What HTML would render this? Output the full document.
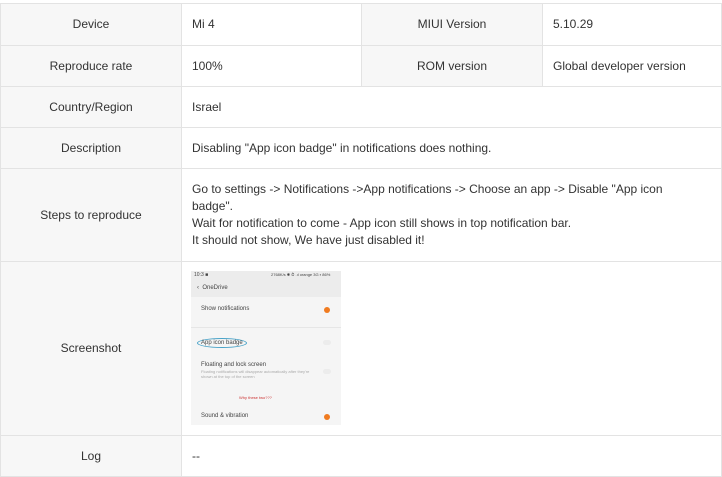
<!DOCTYPE html>
<html><head><style>
*{margin:0;padding:0;box-sizing:border-box}
body{width:722px;height:476px;background:#fff;font-family:"Liberation Sans",sans-serif;font-size:12px;color:#333;overflow:hidden;position:relative}
table{position:absolute;left:0;top:3px;width:722px;border-collapse:collapse}
td{border:1px solid #e3e3e3;padding:0 10px;vertical-align:middle;line-height:17px}
td.l{background:#f7f7f7;text-align:center;width:181px}
.s{position:absolute;left:191px;top:271px;width:150px;height:154px;background:#f5f5f5;font-size:6px;color:#444;overflow:hidden}
.s div{position:absolute}
.t{width:8px;height:5px;border-radius:3px;background:#ececec;left:132px}
.o{width:6px;height:6px;border-radius:50%;background:#f07b20;left:133px}
</style></head><body>
<table>
<tr style="height:42px"><td class="l">Device</td><td style="width:180px">Mi 4</td><td class="l" style="width:180px">MIUI Version</td><td>5.10.29</td></tr>
<tr style="height:41px"><td class="l">Reproduce rate</td><td>100%</td><td class="l">ROM version</td><td>Global developer version</td></tr>
<tr style="height:41px"><td class="l">Country/Region</td><td colspan="3">Israel</td></tr>
<tr style="height:41px"><td class="l">Description</td><td colspan="3">Disabling "App icon badge" in notifications does nothing.</td></tr>
<tr style="height:93px"><td class="l">Steps to reproduce</td><td colspan="3">Go to settings -&gt; Notifications -&gt;App notifications -&gt; Choose an app -&gt; Disable "App icon<br>badge".<br>Wait for notification to come - App icon still shows in top notification bar.<br>It should not show, We have just disabled it!</td></tr>
<tr style="height:174px"><td class="l">Screenshot</td><td colspan="3"></td></tr>
<tr style="height:41px"><td class="l">Log</td><td colspan="3">--</td></tr>
</table>
<div class="s">
<div style="left:0;top:0;width:150px;height:26px;background:#ececec"></div>
<div style="left:3px;top:1px;font-size:5px">10:3 ■</div>
<div style="left:80px;top:1px;font-size:4px">2768K/s ✱ ⏱ .ıl orange 3G ▪ 86%</div>
<div style="left:6px;top:14px;font-size:6px">‹ &nbsp;OneDrive</div>
<div style="left:10px;top:35px">Show notifications</div><div class="o" style="top:36px"></div>
<div style="left:0;top:56px;width:150px;height:1px;background:#e6e6e6"></div>
<div style="left:6px;top:67px;border:1px solid #4aa3c8;border-radius:50%;padding:1px 3px">App icon badge</div><div class="t" style="top:69px"></div>
<div style="left:10px;top:91px">Floating and lock screen</div>
<div style="left:10px;top:98px;font-size:4px;color:#aaa;width:120px">Floating notifications will disappear automatically after they're shown at the top of the screen</div><div class="t" style="top:98px"></div>
<div style="left:48px;top:124px;font-size:4px;color:#c33">Why these two???</div>
<div style="left:10px;top:142px">Sound &amp; vibration</div><div class="o" style="top:143px"></div>
</div>
</body></html>
